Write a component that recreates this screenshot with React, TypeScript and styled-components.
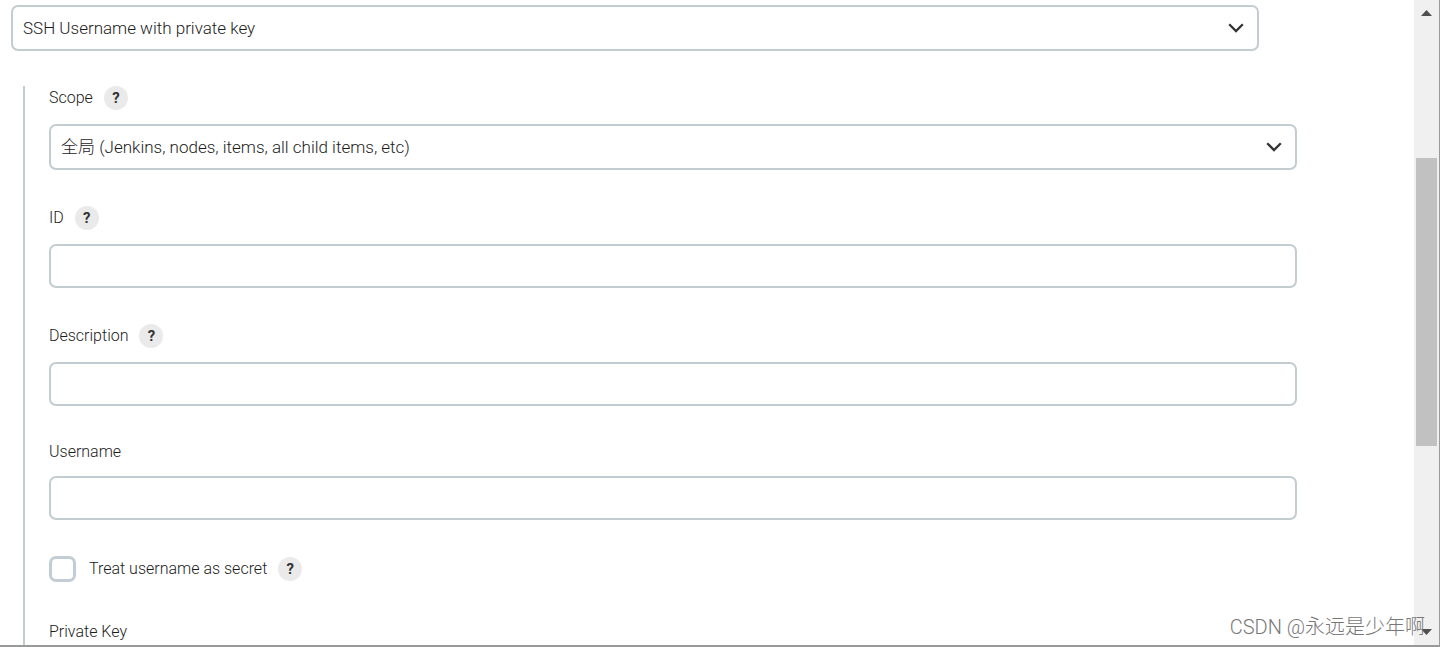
import React from "react";
import styled, { createGlobalStyle } from "styled-components";

const GlobalStyle = createGlobalStyle`
  *, *::before, *::after { box-sizing: border-box; }
  body {
    margin: 0;
    background: #fff;
    color: #1c1c1c;
    font: 300 16px/20px Roboto, "Noto Sans CJK SC", sans-serif;
  }
`;

const Window = styled.div`
  display: flex;
  position: relative;
  height: 100vh;
  overflow: hidden;
  border-right: 1px solid #9b9b9b;
  border-bottom: 2px solid #999;
`;

const Form = styled.form`
  flex: 1;
  min-width: 0;
  padding: 5px 117px 0 11px;
  overflow: hidden;
`;

const KindRow = styled.div`
  margin-right: 38px;
`;

const Credentials = styled.div`
  display: flex;
  flex-direction: column;
  gap: 36px;
  margin: 35px 0 0 12px;
  padding-left: 24px;
  border-left: 2px solid #c3cdd1;
`;

const Field = styled.div`
  display: flex;
  flex-direction: column;
  gap: 14px;
`;

const LabelRow = styled.div`
  display: flex;
  align-items: center;
  gap: 11px;
`;

const CheckRow = styled(LabelRow)`
  padding-bottom: 4px;
`;

const HelpButton = styled.button`
  width: 24px;
  height: 24px;
  padding: 0;
  border: 0;
  border-radius: 50%;
  background: #eaeaea;
  color: #333;
  font: bold 15px/24px Roboto, sans-serif;
  text-align: center;
`;

const TextInput = styled.input`
  width: 100%;
  height: 44px;
  padding: 0 10px;
  border: 2px solid #c3cdd1;
  border-radius: 7px;
  background: #fff;
  color: inherit;
  font: inherit;
  outline: none;
`;

const SelectBox = styled.div`
  display: grid;
  align-items: center;

  & > * { grid-area: 1 / 1; }
  & > svg {
    justify-self: end;
    margin-right: 15px;
    pointer-events: none;
  }
`;

const SelectInput = styled.select`
  appearance: none;
  width: 100%;
  height: 46px;
  padding: 0 40px 0 10px;
  border: 2px solid #c3cdd1;
  border-radius: 7px;
  background: #fff;
  color: inherit;
  font: inherit;
  font-size: 17px;
  outline: none;
`;

const Checkbox = styled.input`
  appearance: none;
  width: 27px;
  height: 26px;
  margin: 0 2px 0 0;
  border: 3px solid #c3cdd5;
  border-radius: 7px;
  background: #fff;
`;

const Scrollbar = styled.div`
  display: flex;
  flex-direction: column;
  width: 25px;
  padding: 0 2px;
  background: #f0f0f0;
`;

const ArrowButton = styled.button`
  display: flex;
  align-items: center;
  justify-content: center;
  height: 26px;
  padding: 0;
  border: 0;
  background: transparent;
`;

const Space = styled.div<{ $share: number }>`
  flex: ${(p) => p.$share};
`;

const Thumb = styled.div`
  flex: 288;
  background: #c1c1c1;
`;

const Watermark = styled.div`
  position: absolute;
  right: 14px;
  bottom: 4px;
  color: #777;
  font: 300 20px/28px Roboto, "Noto Sans CJK SC", sans-serif;
  white-space: nowrap;
  pointer-events: none;
`;

function Select({ id, label, text }: { id: string; label?: string; text: string }) {
  return (
    <SelectBox>
      <SelectInput id={id} aria-label={label}>
        <option>{text}</option>
      </SelectInput>
      <svg width="16" height="10" viewBox="0 0 16 10" fill="none" stroke="#333" strokeWidth="2.3">
        <path d="M1.2 1.2 8 8 14.8 1.2" />
      </svg>
    </SelectBox>
  );
}

function Help({ topic }: { topic: string }) {
  return (
    <HelpButton type="button" title={`Help for feature: ${topic}`}>
      ?
    </HelpButton>
  );
}

function TextField({ id, label, help }: { id: string; label: string; help?: boolean }) {
  return (
    <Field>
      <LabelRow>
        <label htmlFor={id}>{label}</label>
        {help && <Help topic={label} />}
      </LabelRow>
      <TextInput id={id} type="text" />
    </Field>
  );
}

export default function App() {
  return (
    <>
      <GlobalStyle />
      <Window>
        <Form>
          <KindRow>
            <Select id="kind" label="Kind" text="SSH Username with private key" />
          </KindRow>
          <Credentials>
            <Field>
              <LabelRow>
                <label htmlFor="scope">Scope</label>
                <Help topic="Scope" />
              </LabelRow>
              <Select id="scope" text="全局 (Jenkins, nodes, items, all child items, etc)" />
            </Field>
            <TextField id="cred-id" label="ID" help />
            <TextField id="description" label="Description" help />
            <TextField id="username" label="Username" />
            <CheckRow>
              <Checkbox id="secret" type="checkbox" />
              <label htmlFor="secret">Treat username as secret</label>
              <Help topic="Treat username as secret" />
            </CheckRow>
            <TextField id="private-key" label="Private Key" />
          </Credentials>
        </Form>
        <Scrollbar>
          <ArrowButton type="button" aria-label="Scroll up">
            <svg width="11" height="6" viewBox="0 0 11 6" fill="#505050">
              <path d="M0 6 5.5 0 11 6Z" />
            </svg>
          </ArrowButton>
          <Space $share={132} />
          <Thumb />
          <Space $share={173} />
          <ArrowButton type="button" aria-label="Scroll down">
            <svg width="11" height="6" viewBox="0 0 11 6" fill="#505050">
              <path d="M0 0 5.5 6 11 0Z" />
            </svg>
          </ArrowButton>
        </Scrollbar>
        <Watermark>CSDN @永远是少年啊</Watermark>
      </Window>
    </>
  );
}
